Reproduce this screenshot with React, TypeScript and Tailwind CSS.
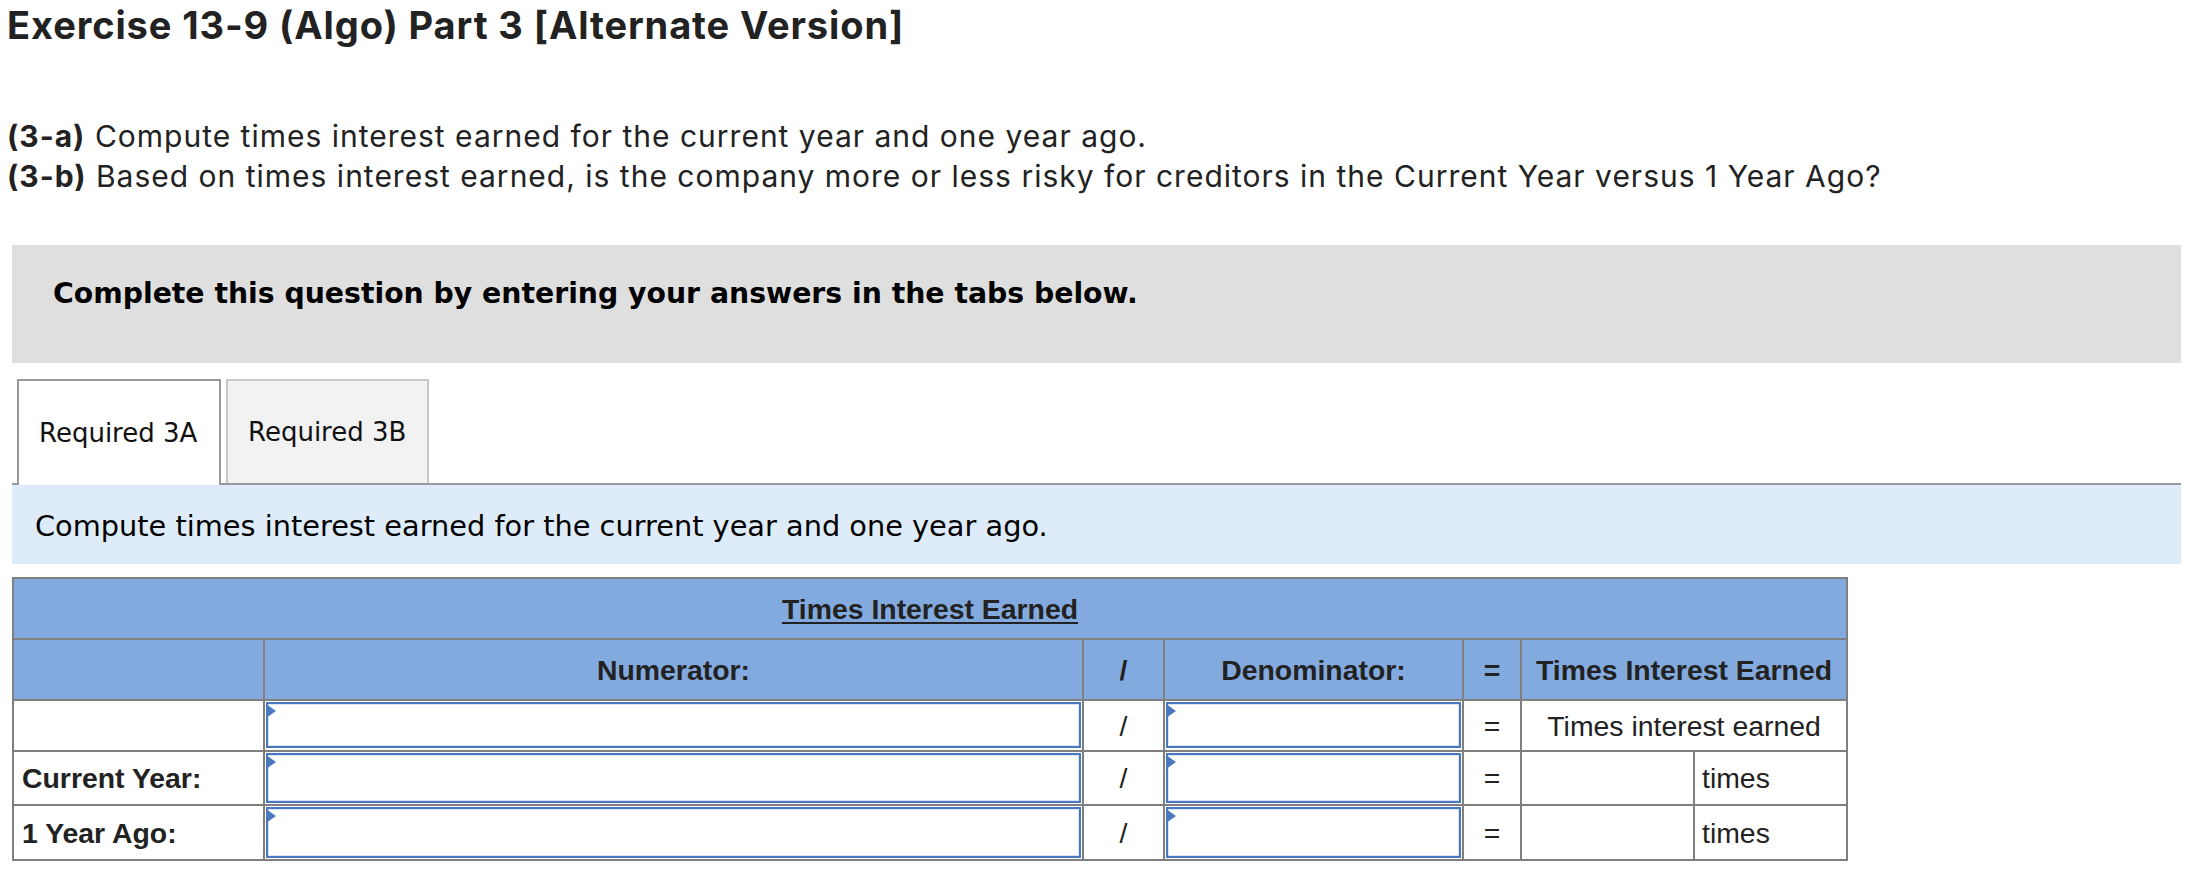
import React from "react";

function InputBox({ h }: { h: string }) {
  return (
    <div
      className={`relative mx-[1px] mt-[1px] ${h} bg-white border-2 border-[#4a78bf] shadow-[inset_0_0_0_1px_#d9e4f4]`}
    >
      <div className="absolute left-[-2px] top-0 w-0 h-0 border-y-[7px] border-y-transparent border-l-[10px] border-l-[#4a78bf]" />
    </div>
  );
}

export default function App() {
  const cell = "border-2 border-[#7f7f7f]";
  return (
    <div className="w-[2208px] h-[882px] bg-white overflow-hidden text-[#222]">
      <div className="pt-[1px] pl-[7px]">
        <h1 className="font-['Inter',sans-serif] font-bold text-[38px] leading-[48px] tracking-[0.9px] text-[#222]">
          Exercise 13-9 (Algo) Part 3 [Alternate Version]
        </h1>
        <div className="mt-[67px] font-['Inter',sans-serif] text-[30px] leading-[40px] tracking-[1px] text-[#222]">
          <p>
            <span className="font-bold">(3-a)</span> Compute times interest earned for the current year and one year ago.
          </p>
          <p>
            <span className="font-bold">(3-b)</span> Based on times interest earned, is the company more or less risky for creditors in the Current Year versus 1 Year Ago?
          </p>
        </div>
      </div>

      <div className="ml-[12px] mr-[27px]">
        <div className="mt-[49px] h-[118px] bg-[#dfdfdf] pl-[41px] pt-[32px] font-['DejaVu_Sans',sans-serif] font-bold text-[28.3px] leading-[34px] text-black">
          Complete this question by entering your answers in the tabs below.
        </div>

        <div className="mt-[16px] flex items-end gap-[5px] pl-[5px] border-b-2 border-[#999] h-[106px] font-['DejaVu_Sans',sans-serif] text-[26px] text-[#111]">
          <div className="h-[106px] -mb-[2px] w-[204px] bg-white border-2 border-b-0 border-[#999] flex items-center px-[20px]">
            Required 3A
          </div>
          <div className="h-[104px] w-[203px] bg-[#f2f2f2] border-2 border-b-0 border-[#c8c8c8] flex items-center px-[20px]">
            Required 3B
          </div>
        </div>

        <div className="h-[79px] bg-[#deebf8] pl-[23px] pt-[24px] font-['DejaVu_Sans',sans-serif] text-[28.8px] leading-[34px] text-black">
          Compute times interest earned for the current year and one year ago.
        </div>

        <table className="mt-[13px] border-collapse table-fixed w-[1836px] font-['Liberation_Sans',Arial,sans-serif] text-[28.4px] leading-[32px] text-[#222]">
          <colgroup>
            <col className="w-[251px]" />
            <col className="w-[819px]" />
            <col className="w-[81px]" />
            <col className="w-[299px]" />
            <col className="w-[58px]" />
            <col className="w-[173px]" />
            <col className="w-[153px]" />
          </colgroup>
          <tbody>
            <tr className="h-[61px]">
              <td colSpan={7} className={`${cell} bg-[#83aade] text-center align-middle font-bold`}>
                <span className="underline decoration-2 underline-offset-[3px]">Times Interest Earned</span>
              </td>
            </tr>
            <tr className="h-[61px] bg-[#83aade] font-bold">
              <td className={cell}></td>
              <td className={`${cell} text-center`}>Numerator:</td>
              <td className={`${cell} text-center`}>/</td>
              <td className={`${cell} text-center`}>Denominator:</td>
              <td className={`${cell} text-center`}>=</td>
              <td colSpan={2} className={`${cell} text-center`}>Times Interest Earned</td>
            </tr>
            <tr className="h-[51px]">
              <td className={cell}></td>
              <td className={`${cell} p-0 align-top`}>
                <InputBox h="h-[46px]" />
              </td>
              <td className={`${cell} text-center`}>/</td>
              <td className={`${cell} p-0 align-top`}>
                <InputBox h="h-[46px]" />
              </td>
              <td className={`${cell} text-center`}>=</td>
              <td colSpan={2} className={`${cell} text-center`}>Times interest earned</td>
            </tr>
            <tr className="h-[54px]">
              <td className={`${cell} pl-[8px] font-bold`}>Current Year:</td>
              <td className={`${cell} p-0 align-top`}>
                <InputBox h="h-[50px]" />
              </td>
              <td className={`${cell} text-center`}>/</td>
              <td className={`${cell} p-0 align-top`}>
                <InputBox h="h-[50px]" />
              </td>
              <td className={`${cell} text-center`}>=</td>
              <td className={cell}></td>
              <td className={`${cell} pl-[7px]`}>times</td>
            </tr>
            <tr className="h-[55px]">
              <td className={`${cell} pl-[8px] font-bold`}>1 Year Ago:</td>
              <td className={`${cell} p-0 align-top`}>
                <InputBox h="h-[51px]" />
              </td>
              <td className={`${cell} text-center`}>/</td>
              <td className={`${cell} p-0 align-top`}>
                <InputBox h="h-[51px]" />
              </td>
              <td className={`${cell} text-center`}>=</td>
              <td className={cell}></td>
              <td className={`${cell} pl-[7px]`}>times</td>
            </tr>
          </tbody>
        </table>
      </div>
    </div>
  );
}
